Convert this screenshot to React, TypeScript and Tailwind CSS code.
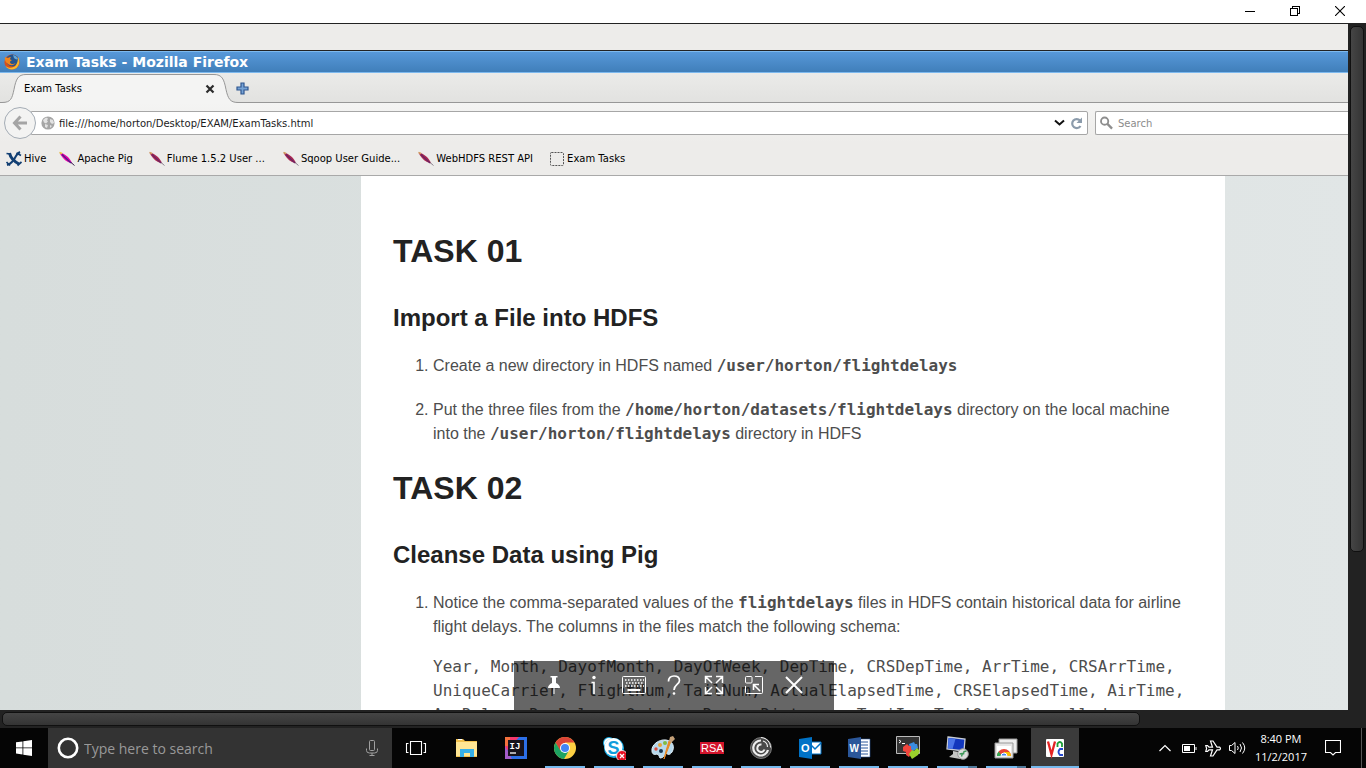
import React from 'react';

const ui = "font-['DejaVu_Sans',sans-serif] text-[10px] leading-[16px]";

function FirefoxLogo() {
  return (
    <svg width="16" height="16" viewBox="0 0 16 16" aria-hidden="true">
      <circle cx="8" cy="8" r="7.6" fill="#d8501c" />
      <circle cx="8.4" cy="6.4" r="6" fill="#24548f" />
      <path d="M9 1a6 6 0 0 1 5 4c-1 1-3 0-4-1z" fill="#62a6d8" />
      <path d="M1 3c1 1 2 1 3 1 1-1 2-1 3-1-1 1-1 2-.5 2.700l1.500.3c-1 1-2 1-2 2.500 1 2 4 2 5.500.5-1 2.500-6 3-8 .5C1 8 .5 5 1 3z" fill="#f0851e" />
      <path d="M14 3c2 4 1.500 8-1.500 11C9 16.500 3.500 15.500 1.500 12 5 15 10 14 12 11c1.500-2 2-5 2-8z" fill="#fbb829" />
    </svg>
  );
}

function HiveIcon() {
  return (
    <svg width="16" height="16" viewBox="0 0 16 16" fill="none" stroke="#123f73" aria-hidden="true">
      <path d="M3.500 2c1 5 4 8 9.500 11" strokeWidth="3" />
      <path d="M14 1c-2 1-3 2-4 4-2 4-5 8-9 9" strokeWidth="2" />
      <path d="M.5 2.500l4 .5M10.500 2l4.500 2.500M.5 11l3.500 3.500M11.500 14.500l4-3.500" strokeWidth="1.700" />
    </svg>
  );
}

function Feather({ bright = false }: { bright?: boolean }) {
  return (
    <svg width="16" height="16" viewBox="0 0 16 16" aria-hidden="true">
      <path d="M.5 1.500C4 2 9 5 11 8.500l2.500 4L9 11C5 9 2 5 .5 1.500z" fill={bright ? '#e800a8' : '#a92952'} />
      <path d="M3 3.500l9 8.500" stroke={bright ? '#472088' : '#6a2463'} strokeWidth="1.200" />
      <path d="M.5 1.500l2.500 1" stroke={bright ? '#e5d43b' : '#d3a060'} strokeWidth="1.500" />
      <path d="M12 11.500l3.500 3" stroke={bright ? '#37224e' : '#8c8490'} strokeWidth="1" />
    </svg>
  );
}

function BlankPage() {
  return (
    <svg width="16" height="16" viewBox="0 0 16 16" aria-hidden="true">
      <rect x="1.500" y="1.500" width="13" height="13" rx="1" fill="none" stroke="#555" strokeDasharray="2 1" />
    </svg>
  );
}

const bookmarks = [
  { label: 'Hive', icon: <HiveIcon />, cls: 'mr-[13px]' },
  { label: 'Apache Pig', icon: <Feather bright />, cls: 'mr-[16px]' },
  { label: 'Flume 1.5.2 User ...', icon: <Feather />, cls: 'mr-[18px]' },
  { label: 'Sqoop User Guide...', icon: <Feather />, cls: 'mr-[18px]' },
  { label: 'WebHDFS REST API', icon: <Feather />, cls: 'mr-[16px]' },
  { label: 'Exam Tasks', icon: <BlankPage />, cls: '' },
];

function WindowBar() {
  return (
    <header className="flex h-[23px] shrink-0 justify-end bg-white pb-[2px]">
      <button aria-label="Minimize" className="flex w-[45px] items-center justify-center">
        <svg width="10" height="10" viewBox="0 0 10 10" stroke="#000" shapeRendering="crispEdges"><path d="M0 5.500h10" /></svg>
      </button>
      <button aria-label="Restore" className="flex w-[45px] items-center justify-center">
        <svg width="10" height="10" viewBox="0 0 10 10" fill="none" stroke="#000" shapeRendering="crispEdges"><path d="M.5 2.500h7v7h-7zM2.500 2.500v-2h7v7h-2" /></svg>
      </button>
      <button aria-label="Close window" className="mr-[3px] flex w-[46px] items-center justify-center">
        <svg width="10" height="10" viewBox="0 0 10 10" stroke="#000" strokeWidth="1.100"><path d="M0 0l10 10M10 0L0 10" /></svg>
      </button>
    </header>
  );
}

function TabStrip() {
  return (
    <div className="flex h-[30px] shrink-0 items-center border-b border-[#979797] bg-linear-to-b from-[#ebebe9] to-[#e2e2e0]">
      <div className="relative h-[30px] w-[236px] shrink-0">
        <svg className="absolute top-0 left-0" width="240" height="30" viewBox="0 0 240 30" aria-hidden="true">
          <path d="M0 29.500h2c9 0 10-4 12-13C16 6 18 1.500 26 1.500h188c8 0 10 4.500 12 15 2 9 4 13 12 13V30H0z" fill="#f4f4f3" />
          <path d="M0 29.500h2c9 0 10-4 12-13C16 6 18 1.500 26 1.500h188c8 0 10 4.500 12 15 2 9 4 13 12 13" fill="none" stroke="#979797" />
        </svg>
        <div className="relative flex h-full items-center justify-between pt-[2px] pr-[21px] pl-[24px]">
          <span>Exam Tasks</span>
          <button aria-label="Close tab">
            <svg width="10" height="10" viewBox="0 0 10 10" stroke="#2c2c2c" strokeWidth="2.200"><path d="M1.500 1.500l7 7M8.500 1.500l-7 7" /></svg>
          </button>
        </div>
      </div>
      <button aria-label="New tab" className="pt-[2px]">
        <svg width="13" height="13" viewBox="0 0 13 13"><path d="M5 1h3v4h4v3H8v4H5V8H1V5h4z" fill="#76a3d5" stroke="#2f568f" strokeWidth="1.200" /></svg>
      </button>
    </div>
  );
}

function NavBar() {
  return (
    <div className="flex h-[40px] shrink-0 items-center bg-[#edecea] bg-linear-to-b from-[#f4f4f3] to-[#edecea] pl-[4px]">
      <button aria-label="Back" className="relative z-10 -mr-[5px] flex size-[32px] shrink-0 items-center justify-center rounded-full border border-[#a4acb5] bg-[#f3f3f2]">
        <svg width="16" height="16" viewBox="0 0 16 16" fill="none" stroke="#a5a5a5" strokeWidth="3"><path d="M15 8H3M8.500 1.500L2.500 8l6 6.500" /></svg>
      </button>
      <div className="flex h-[24px] w-[1057px] shrink items-center rounded-r-[2px] border border-[#a6a6a6] bg-white pr-[4px] pl-[9px]">
        <svg width="14" height="14" viewBox="0 0 14 14" aria-hidden="true" className="shrink-0">
          <circle cx="7" cy="7" r="6.600" fill="#a6a6a6" />
          <path d="M2 4l3-2.500 2 1-1 2 1 1-2 2-2-1zM9 3l3 1 1 3-2 1-2-2zM4 8l3 1-1 3-2-1zM9 9l2 1-2 2z" fill="#e2e2e2" />
        </svg>
        <input aria-label="Address" defaultValue="file:///home/horton/Desktop/EXAM/ExamTasks.html" className="ml-[4px] min-w-0 flex-1 bg-transparent pt-px text-[#1c1c1c] outline-none" />
        <button aria-label="Show history" className="mr-[5px]">
          <svg width="11" height="8" viewBox="0 0 11 8" fill="none" stroke="#111" strokeWidth="2"><path d="M1 1.500l4.500 4 4.500-4" /></svg>
        </button>
        <button aria-label="Reload">
          <svg width="13" height="13" viewBox="0 0 13 13"><path d="M10 3.500A4.500 4.500 0 1 0 10.500 9" fill="none" stroke="#8b9bab" strokeWidth="2.200" /><path d="M12 .5v5.500H6.500z" fill="#8b9bab" /></svg>
        </button>
      </div>
      <div className="ml-[7px] flex h-[24px] min-w-[253px] flex-1 items-center rounded-l-[2px] border border-r-0 border-[#a6a6a6] bg-white pl-[4px]">
        <svg width="14" height="14" viewBox="0 0 14 14" fill="none" stroke="#8e8e8e" aria-hidden="true"><circle cx="5" cy="5" r="3.900" strokeWidth="2" /><path d="M8 8l5 5" strokeWidth="2.500" /></svg>
        <input aria-label="Search" placeholder="Search" className="ml-[5px] w-full bg-transparent pt-px outline-none placeholder:text-[#8b8b8b]" />
      </div>
    </div>
  );
}

const h1 = 'text-[32px] leading-[44px] font-bold text-[#222]';
const h2 = 'mt-[29px] text-[24px] leading-[32px] font-bold text-[#222]';
const list = 'mt-[20px] list-decimal space-y-[20px] pl-[40px]';

function Code({ children }: { children: React.ReactNode }) {
  return <code className="font-['DejaVu_Sans_Mono',monospace] text-[16px] font-bold">{children}</code>;
}

function Page() {
  return (
    <main className="min-h-0 flex-1 overflow-hidden bg-linear-to-r from-[#d7dddc] to-[#e1e6e6]">
      <article className="ml-[361px] h-full w-[864px] bg-white px-[32px] pt-[53px] font-['Liberation_Sans',sans-serif] text-[16px] leading-[24px] text-[#4d4d4d]">
        <section>
          <h1 className={h1}>TASK 01</h1>
          <h2 className={h2}>Import a File into HDFS</h2>
          <ol className={list}>
            <li>Create a new directory in HDFS named <Code>/user/horton/flightdelays</Code></li>
            <li>
              Put the three files from the <Code>/home/horton/datasets/flightdelays</Code> directory on the local machine
              <br />into the <Code>/user/horton/flightdelays</Code> directory in HDFS
            </li>
          </ol>
        </section>
        <section className="mt-[20px]">
          <h1 className={h1}>TASK 02</h1>
          <h2 className={h2}>Cleanse Data using Pig</h2>
          <ol className={list}>
            <li>
              Notice the comma-separated values of the <Code>flightdelays</Code> files in HDFS contain historical data for airline
              <br />flight delays. The columns in the files match the following schema:
              <pre className="mt-[16px] font-['DejaVu_Sans_Mono',monospace] text-[16px] leading-[24px]">
                {'Year, Month, DayofMonth, DayOfWeek, DepTime, CRSDepTime, ArrTime, CRSArrTime,\nUniqueCarrier, FlightNum, TailNum, ActualElapsedTime, CRSElapsedTime, AirTime,\nArrDelay, DepDelay, Origin, Dest, Distance, TaxiIn, TaxiOut, Cancelled,'}
              </pre>
            </li>
          </ol>
        </section>
      </article>
    </main>
  );
}

const tools = [
  { label: 'Pin', art: <path d="M7.500 1h7v1.500h-1.500V8c2 1 4 2.500 4 5h-5.500V19h-1v-6H5c0-2.500 2-4 4-5V2.500H7.500z" fill="#fff" stroke="none" /> },
  { label: 'Information', art: <><circle cx="11" cy="2.500" r="1.700" fill="#fff" stroke="none" /><path d="M8.500 7.500H11V19" strokeWidth="1.600" /></> },
  { label: 'Keyboard', art: <><rect x="-.5" y="1.500" width="23" height="17" rx="1" /><path d="M2 5h19M3 8h17M2 11h19" strokeDasharray="1.500 1.500" strokeWidth="1.500" /><path d="M4.500 15h13" strokeWidth="2" /></> },
  { label: 'Help', art: <><path d="M5.500 6.500c0-3.500 2-5.500 5.500-5.500s5.500 2 5.500 4.500c0 4-5.500 4-5.500 9.500" strokeWidth="1.700" /><circle cx="11" cy="18.500" r="1.300" fill="#fff" stroke="none" /></> },
  { label: 'Full screen', art: <path d="M2.500 8V1.500H9M13 1.500h6.500V8M19.500 12v6.500H13M9 18.500H2.500V12M2.500 1.500L9 8M19.500 1.500L13 8M19.500 18.500L13 12M2.500 18.500L9 12" strokeWidth="1.500" /> },
  { label: 'Scale', art: <><rect x="2.500" y="1.500" width="6.500" height="6.500" rx="1" /><path d="M12 1.500h6.500q1 0 1 1v15q0 1-1 1h-15q-1 0-1-1V11" /><path d="M17 16l-6-6M10.500 15V9.500H16" strokeWidth="1.600" /></> },
  { label: 'Close connection', art: <path d="M3 2l16 16M19 2L3 18" strokeWidth="2" /> },
];

function FloatingToolbar() {
  return (
    <div role="toolbar" aria-label="Viewer" className="absolute bottom-0 left-1/2 flex h-[49px] -translate-x-1/2 bg-black/60 px-5 pb-[2px]">
      {tools.map((t) => (
        <button key={t.label} aria-label={t.label} className="flex w-10 items-center justify-center">
          <svg width="24" height="20" viewBox="-1 0 24 20" fill="none" stroke="#fff">{t.art}</svg>
        </button>
      ))}
    </div>
  );
}

const sans = 'Liberation Sans, sans-serif';

const apps = [
  { name: 'Task View', state: 'first', art: <g fill="none" stroke="#fff" strokeWidth="1.100"><path d="M6.500 5.500h11v13h-11zM4.500 7.500h-2v9h2M19.500 7.500h2v9h-2" /></g> },
  { name: 'File Explorer', state: 'idle', art: <><path d="M1 3h7l2 2h12v16H1z" fill="#f2c14e" /><path d="M1 6h21v14H1z" fill="#ffe694" /><path d="M3 3.500h4" stroke="#fff" /><path d="M5 13h14v8h-4v-4H9v4H5z" fill="#36b0e8" /></> },
  { name: 'IntelliJ IDEA', state: 'idle', art: <><path d="M1 1h22v22H1z" fill="#2c6fe8" /><path d="M1 1h14L1 17z" fill="#f4386c" /><path d="M1 10l7 13H1z" fill="#a45bc8" /><path d="M1 1h5v9H1z" fill="#f5713d" /><path d="M4 4h16v16H4z" fill="#17131c" /><text x="5.500" y="13" fontSize="9" fontWeight="700" fill="#fff" fontFamily="Liberation Mono, monospace">IJ</text><path d="M6 17h6" stroke="#fff" strokeWidth="1.300" /></> },
  { name: 'Google Chrome', state: 'open', art: <><circle cx="12" cy="12" r="11" fill="#fdd043" /><path d="M2.500 6.500a11 11 0 0 1 19 0H12v5.500l-5 3z" fill="#db4437" /><path d="M2.500 6.500a11 11 0 0 0 8.500 16.500l5-8.500-4-2.500-5 2z" fill="#1da362" /><circle cx="12" cy="12" r="5" fill="#fff" /><circle cx="12" cy="12" r="4" fill="#4285f4" /></> },
  { name: 'Skype', state: 'open', art: <><circle cx="7" cy="7" r="6" fill="#19aee8" /><circle cx="7" cy="7" r="5" fill="#fff" /><circle cx="12" cy="12" r="10" fill="#19aee8" /><circle cx="11.500" cy="11" r="9" fill="#fff" /><text x="5.500" y="17.500" fontSize="18" fontWeight="700" fill="#109ddc" fontFamily={sans}>S</text><circle cx="20" cy="20" r="5.500" fill="#e81123" stroke="#fff" strokeWidth=".8" /><path d="M18 18l4 4M22 18l-4 4" stroke="#fff" strokeWidth="1.300" /></> },
  { name: 'Paint', state: 'open', art: <><path d="M1 15C0 9 8 3 15 4c7 1 9 7 6 12-2 3-4 3-6 1-2 3-3 5-6 5-1-2-1-3-3-4-3 1-5 0-5-3z" fill="#b6d8ec" stroke="#e3f2fa" /><circle cx="9" cy="9" r="2" fill="#e7a53c" /><circle cx="14" cy="7" r="2" fill="#81bb42" /><circle cx="5" cy="13" r="1.700" fill="#df4b3a" /><circle cx="10" cy="15" r="2" fill="#17344e" /><path d="M20 5l-7 18 2-8 3-10z" fill="#e98823" stroke="#e98823" /><path d="M18 5l1-4 3-1 2 3-4 4z" fill="#c5a179" /></> },
  { name: 'RSA SecurID', state: 'open', art: <><path d="M0 6h24v12H0z" fill="#d3152c" /><text x="1" y="16" fontSize="11" fill="#fff" fontFamily={sans}>RSA</text></> },
  { name: 'Citrix Receiver', state: 'open', art: <><circle cx="12" cy="12" r="10.500" fill="#4a4a4a" stroke="#777" /><g fill="none" stroke="#eee"><path d="M12 4.500a7.500 7.500 0 1 0 7 9.500" strokeWidth="2.200" /><path d="M12.500 8.500a3.700 3.700 0 1 0 3 5" strokeWidth="2" /><path d="M12 1.500c6 .5 9.500 5 9.500 10" strokeWidth="1" /><path d="M14 5c3 1 4.500 3 4.500 6" strokeWidth="1.200" /></g></> },
  { name: 'Outlook', state: 'open', art: <><path d="M12 6h11v12H12z" fill="#fff" stroke="#0072c6" /><path d="M12 8l5 5 6-6" fill="none" stroke="#0072c6" strokeWidth="1.500" /><path d="M1 3l13-2v22L1 21z" fill="#0072c6" /><text x="3" y="16" fontSize="11" fontWeight="700" fill="#fff" fontFamily={sans}>O</text></> },
  { name: 'Word', state: 'open', art: <><path d="M12 3h11v18H12z" fill="#fff" stroke="#2b579a" strokeWidth=".6" /><path d="M14 6h7M14 9h7M14 12h7M14 15h7M14 18h7" stroke="#2b579a" /><path d="M1 3l13-2v22L1 21z" fill="#2b579a" /><text x="2.500" y="16" fontSize="10" fontWeight="700" fill="#fff" fontFamily={sans}>W</text></> },
  { name: 'MobaXterm', state: 'open', art: <><path d="M.5.5h23v17H.5z" fill="#343434" stroke="#bbb" /><path d="M3 4l2 1.500L3 7M6 7.500h3" stroke="#fff" fill="none" /><path d="M13 8l5-2 1 2 2 0 1 4-5 3-3-2z" fill="#3b8ce0" /><path d="M7 11l4-3 2 2 2 0 0 3 2 2-4 6-3-2 0-3-3-1z" fill="#f0453d" /><path d="M13 18l3-4 2 1 3-3 3 3-2 4-6 4z" fill="#9bd22d" /></> },
  { name: 'PuTTY', state: 'grouped', art: <><path d="M3 1l17 2-1 12-17-2z" fill="#1237bd" stroke="#c8cdd5" strokeWidth="1.300" /><path d="M3.500 2l7 1-3 10-4.500-1z" fill="#4a75e8" /><path d="M8 15l6 1v3l4 2-3 2-11-2 4-3z" fill="#c4c5c3" /><circle cx="18" cy="18" r="5.300" fill="#ddd" stroke="#999" /><path d="M14.500 18l3-.5-1 3M18.500 18.500l.5-3 2.500-.5" fill="none" stroke="#3d9658" strokeWidth="1.400" /></> },
  { name: 'Remote Desktop', state: 'grouped', art: <><path d="M5 3h18v14H5z" fill="#ededed" stroke="#999" /><path d="M1 7h18v15H1z" fill="#e6e6e6" stroke="#999" /><path d="M3 10h14v10H3z" fill="#fff" /><path d="M3 20a7 7 0 0 1 14 0z" fill="#e94235" /><path d="M3 20a7 7 0 0 1 1.500-4.500L8 20z" fill="#34a853" /><path d="M17 20a7 7 0 0 0-1.500-4H10v4z" fill="#fbbc05" /><path d="M7 20a3 3 0 0 1 6 0z" fill="#4285f4" stroke="#fff" /></> },
  { name: 'VNC Viewer', state: 'active', art: <><rect x="3" y="3" width="18" height="18" rx="1" fill="#fff" /><path d="M5 5.500l3.500 13 3.500-13" fill="none" stroke="#e42424" strokeWidth="2.300" /><path d="M14.500 11V7.500q2.500-3 4.500 0V11" fill="none" stroke="#1b9d37" strokeWidth="1.800" /><path d="M20 13h-3q-3 3 0 6h3" fill="none" stroke="#2548cf" strokeWidth="1.800" /></> },
];

const underline: Record<string, string> = {
  first: 'hidden',
  idle: 'hidden',
  open: 'w-[40px] bg-[#76b9ed]',
  grouped: 'w-[40px] bg-linear-to-r from-[#76b9ed] from-78% to-[#50799a] to-78%',
  active: 'w-[48px] bg-[#76b9ed]',
};

const slot: Record<string, string> = {
  first: 'mr-[2px]',
  active: 'bg-[#3b3b3b]',
};

function Taskbar() {
  return (
    <footer className="flex h-[40px] shrink-0 bg-[#050505] font-['Open_Sans',sans-serif] text-white">
      <button aria-label="Start" className="flex w-[48px] shrink-0 items-center justify-center">
        <svg width="16" height="16" viewBox="0 0 16 16" fill="#fff"><path d="M0 2.300l6.500-.9v6.100H0zM7.300 1.300L16 0v7.500H7.300zM0 8.300h6.500v6.200L0 13.600zM7.300 8.300H16V16l-8.700-1.300z" /></svg>
      </button>
      <div className="flex w-[344px] items-center bg-[#333] pr-[14px] pl-[9px]">
        <svg width="22" height="22" viewBox="0 0 22 22" fill="none" stroke="#fff" strokeWidth="2.600" aria-hidden="true" className="shrink-0"><circle cx="11" cy="11" r="9.200" /></svg>
        <input aria-label="Type here to search" placeholder="Type here to search" className="ml-[5px] min-w-0 flex-1 bg-transparent text-[14px] outline-none placeholder:text-[#999]" />
        <button aria-label="Voice search">
          <svg width="12" height="16" viewBox="0 0 12 16" fill="none" stroke="#a0a0a0"><rect x="3.500" y=".5" width="5" height="10" rx="1" /><path d="M.5 8.500v2q0 2.500 3 2.500h5q3 0 3-2.500v-2M6 13v2.500M3.500 15.500h5" /></svg>
        </button>
      </div>
      <nav aria-label="Applications" className="flex gap-px">
        {apps.map((a) => (
          <button key={a.name} aria-label={a.name} className={`relative flex w-[48px] items-center justify-center ${slot[a.state] ?? ''}`}>
            <svg width="24" height="24" viewBox="0 0 24 24">{a.art}</svg>
            <span className={`absolute bottom-0 left-1/2 h-[2px] -translate-x-1/2 ${underline[a.state]}`} />
          </button>
        ))}
      </nav>
      <div className="ml-auto flex items-center">
        <button aria-label="Show hidden icons" className="mr-[11px]">
          <svg width="12" height="8" viewBox="0 0 12 8" fill="none" stroke="#fff" strokeWidth="1.200"><path d="M.5 7L6 1.500 11.500 7" /></svg>
        </button>
        <button aria-label="Battery" className="mr-[8px]">
          <svg width="15" height="9" viewBox="0 0 15 9" fill="none" stroke="#fff"><path d="M.5.5h12v8H.5zM14 3v3" /><path d="M2 2h6v5H2z" fill="#fff" stroke="none" /></svg>
        </button>
        <button aria-label="Airplane mode" className="mr-[7px]">
          <svg width="17" height="17" viewBox="0 0 17 17" fill="none" stroke="#fff" strokeWidth="1.200"><path d="M.8 5.500h1.700L4 7.200h3.500L5.500 1H8l4 6.200h2.700q1.500 1.300 0 2.600H12L8 16H5.500l2-6.200H4l-1.500 1.700H.8l.8-3z" /></svg>
        </button>
        <button aria-label="Volume" className="mr-[9px]">
          <svg width="17" height="14" viewBox="0 0 17 14" fill="none" stroke="#fff"><path d="M.5 4.500h2L6 1.500v11L2.500 9.500h-2zM8.500 5q1.500 2 0 4M11 3q3 4 0 8M13.500 1.500q4.500 5.500 0 11" /></svg>
        </button>
        <button aria-label="Date and time" className="mr-[18px] text-center text-[11px] leading-[18px]">
          8:40 PM<br />11/2/2017
        </button>
        <button aria-label="Notifications" className="mr-[20px]">
          <svg width="16" height="16" viewBox="0 0 16 16" fill="none" stroke="#fff" strokeWidth="1.100"><path d="M.5.5h15v12h-5L8 15l-2.500-2.500h-5z" /></svg>
        </button>
        <div className="h-[40px] w-[5px] border-l border-[#555]" />
      </div>
    </footer>
  );
}

export default function App() {
  return (
    <div className="flex h-screen flex-col overflow-hidden bg-[#222]">
      <WindowBar />
      <div className="flex min-h-0 flex-1 border-t border-[#222]">
        <div className={`relative flex min-w-0 flex-1 flex-col overflow-hidden bg-[#edecea] text-black ${ui}`}>
          <div className="h-[27px] shrink-0 border-b border-[#222]" />
          <div className="flex h-[22px] shrink-0 items-center gap-[6px] border-y border-[#7db9ee] bg-linear-to-b from-[#5798d9] to-[#407fba] pl-[4px]">
            <FirefoxLogo />
            <span className="text-[14px] leading-[18px] font-bold text-white">Exam Tasks - Mozilla Firefox</span>
          </div>
          <TabStrip />
          <NavBar />
          <nav aria-label="Bookmarks" className="flex h-[33px] shrink-0 items-center border-b border-[#a9a9a9] pl-[6px]">
            {bookmarks.map((b) => (
              <a key={b.label} href="#" className={`flex items-center gap-[2px] whitespace-nowrap ${b.cls}`}>{b.icon}{b.label}</a>
            ))}
          </nav>
          <Page />
          <FloatingToolbar />
        </div>
        <div className="w-[18px] shrink-0 px-[2px] pt-[2px]">
          <div className="h-[526px] w-[14px] rounded-[5px] border border-[#101010] bg-linear-to-r from-[#454545] to-[#343434]" />
        </div>
      </div>
      <div className="h-[18px] shrink-0 px-[2px] pt-[2px]">
        <div className="h-[14px] w-[1138px] rounded-[5px] border border-[#101010] bg-linear-to-b from-[#454545] to-[#343434]" />
      </div>
      <Taskbar />
    </div>
  );
}
